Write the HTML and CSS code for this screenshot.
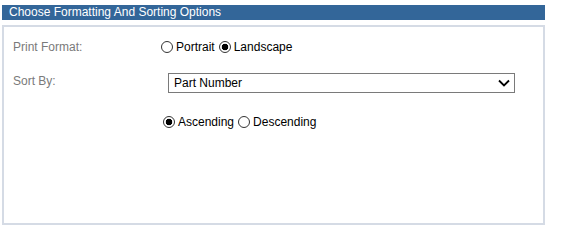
FILE: index.html
```html
<!DOCTYPE html>
<html lang="en">
<head>
	<meta charset="UTF-8">
	<title>Formatting And Sorting Options</title>
	<link rel="stylesheet" href="styles.css">
</head>
<body>
	<div class="hd">Choose Formatting And Sorting Options</div>
	<div class="panel">
		<div class="row r1">
			<span class="lbl">Print Format:</span>
			<div class="opts">
				<label><input type="radio" name="fmt"> Portrait</label>
				<label><input type="radio" name="fmt" checked> Landscape</label>
			</div>
		</div>
		<div class="row r2">
			<span class="lbl">Sort By:</span>
			<div class="sel">
				<span>Part Number</span>
				<svg width="12" height="8" viewBox="0 0 12 8"><path d="M1 1.5 L6 6.5 L11 1.5" fill="none" stroke="#000" stroke-width="1.8"/></svg>
			</div>
		</div>
		<div class="row r3">
			<span class="lbl"></span>
			<div class="opts">
				<label><input type="radio" name="ord" checked> Ascending</label>
				<label><input type="radio" name="ord"> Descending</label>
			</div>
		</div>
	</div>
</body>
</html>
```
FILE: styles.css
```css
body{margin:0;font-family:"Liberation Sans",Arial,sans-serif;font-size:12px;color:#000;background:#fff;}
.hd{
	margin:5px 0 0 2px;
	width:536px;
	height:15px;
	line-height:15px;
	padding-left:7px;
	background-color:#336699;
	color:#fff;
}
.panel{
	margin:5px 0 0 2px;
	width:539px;
	height:196px;
	border:2px solid #d5dbe5;
}
.row{display:flex;align-items:center;}
.lbl{width:148px;padding-left:9px;color:#7a7a7a;flex:none;}
.r1{margin-top:11px;height:18px;}
.r2{margin-top:17px;height:20px;}
.r2 .lbl{align-self:flex-start;margin-top:1px;}
.r3{margin-top:20px;height:18px;}
.opts{display:flex;gap:4px;}
.r3 .opts{margin-left:2px;}
label{display:flex;align-items:center;gap:3px;}
input[type=radio]{
	appearance:none;
	-webkit-appearance:none;
	margin:0;
	width:12px;
	height:12px;
	border:1px solid #333;
	border-radius:50%;
	background:#fff;
}
input[type=radio]:checked{
	background:radial-gradient(circle,#000 0,#000 3px,#fff 3.6px);
}
.sel{
	margin-left:7px;
	width:336px;
	height:18px;
	border:1px solid #7a7a7a;
	display:flex;
	align-items:center;
	justify-content:space-between;
	padding:0 4px 0 5px;
	box-sizing:content-box;
}
.sel span{color:#000;}
```
